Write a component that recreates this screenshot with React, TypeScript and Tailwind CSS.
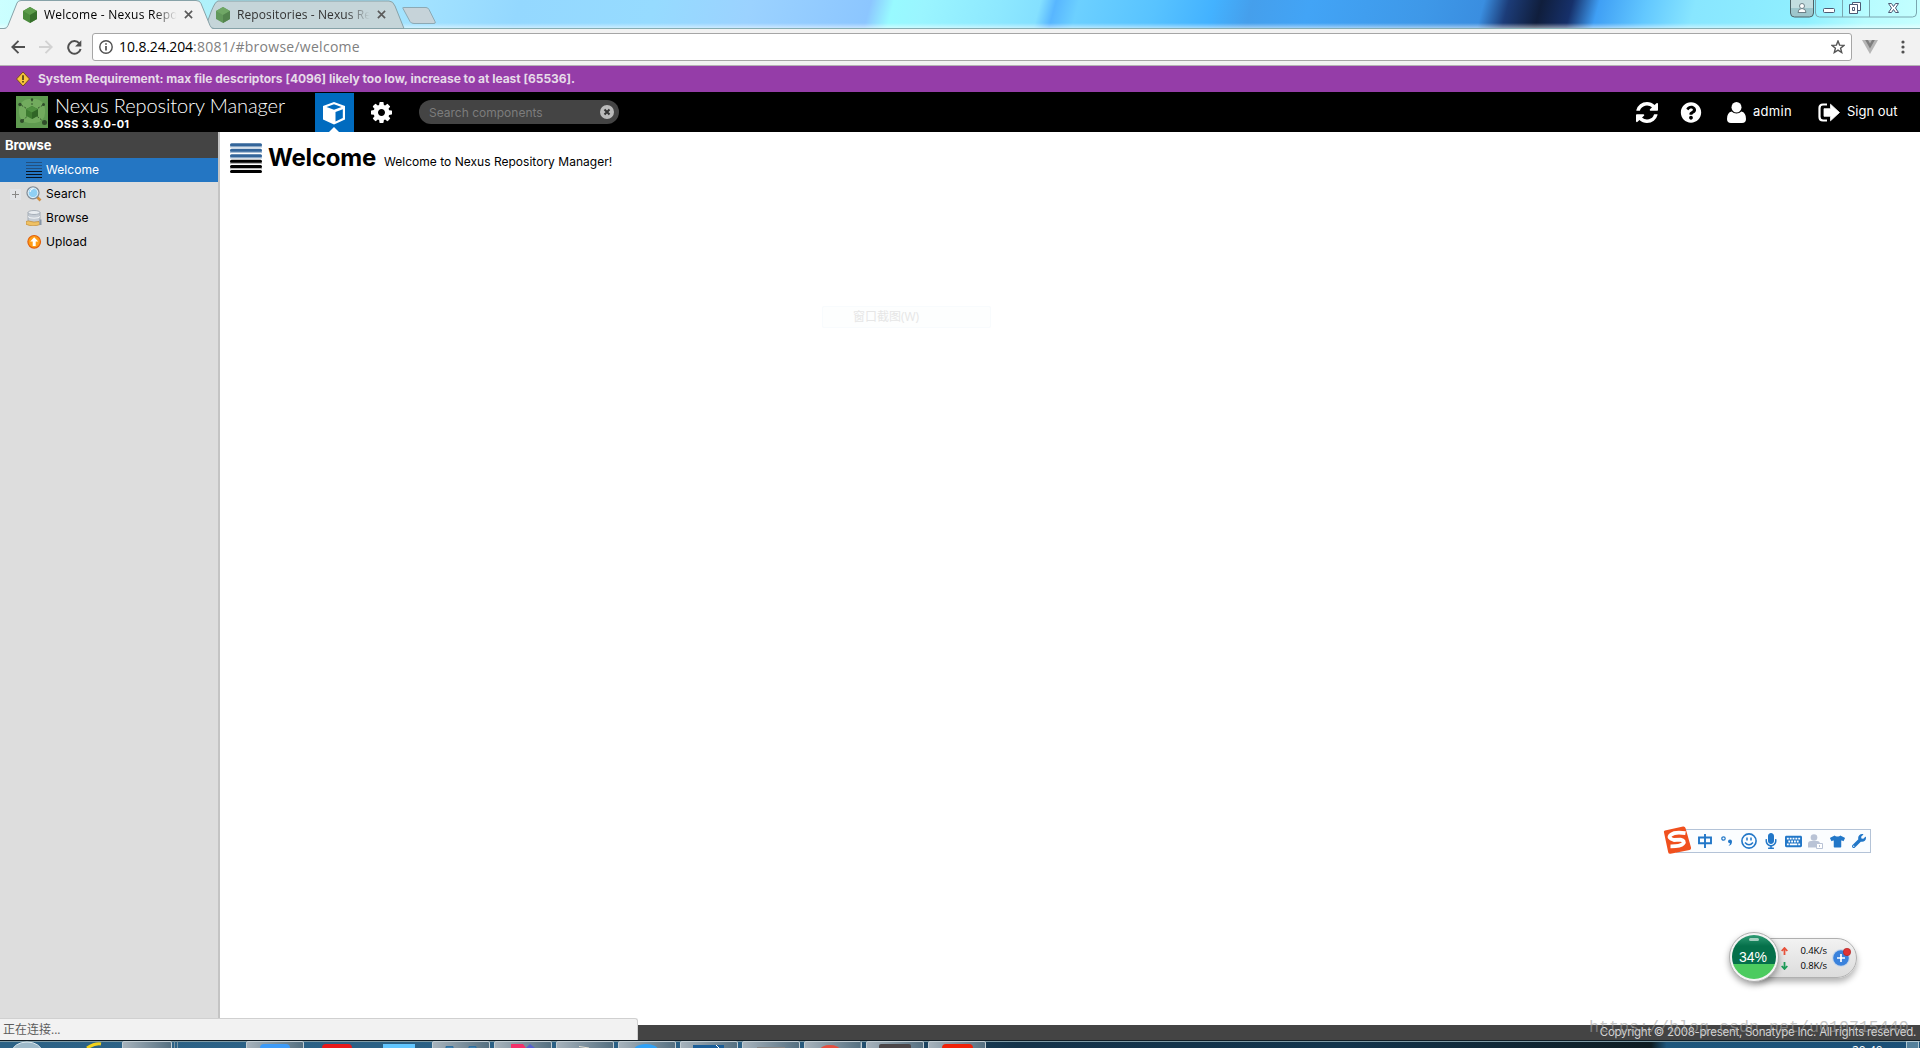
import type { ReactNode } from "react";
import {
  FaKeyboard,
  FaMicrophone,
  FaQuestionCircle,
  FaTshirt,
  FaWrench,
} from "react-icons/fa";

const COG_PATH =
  "M1152 896q0-106-75-181t-181-75-181 75-75 181 75 181 181 75 181-75 75-181zm512-109v222q0 12-8 23t-20 13l-185 28q-19 54-39 91 35 50 107 138 10 12 10 25t-9 23q-27 37-99 108t-94 71q-12 0-26-9l-138-108q-44 23-91 38-16 136-29 186-7 28-36 28h-222q-14 0-24.5-8.5t-11.5-21.5l-28-184q-49-16-90-37l-141 107q-10 9-25 9-14 0-25-11-126-114-165-168-7-10-7-23 0-12 8-23 15-21 51-66.5t54-70.5q-27-50-41-99l-183-27q-13-2-21-12.5t-8-23.5v-222q0-12 8-23t19-13l186-28q14-46 39-92-40-57-107-138-10-12-10-24 0-10 9-23 26-36 98.5-107.5t94.5-71.5q13 0 26 10l138 107q44-23 91-38 16-136 29-186 7-28 36-28h222q14 0 24.5 8.5t11.5 21.5l28 184q49 16 90 37l142-107q9-9 24-9 13 0 25 10 129 119 165 170 7 8 7 22 0 12-8 23-15 21-51 66.5t-54 70.5q26 50 41 98l183 28q13 2 21 12.5t8 23.5z";

const REFRESH_PATH =
  "M1639 1056q0 5-1 7-64 268-268 434.5t-478 166.5q-146 0-282.5-55t-243.5-157l-129 129q-19 19-45 19t-45-19-19-45v-448q0-26 19-45t45-19h448q26 0 45 19t19 45-19 45l-137 137q71 66 161 102t187 36q134 0 250-65t186-179q11-17 53-117 8-23 30-23h192q13 0 22.5 9.5t9.5 22.5zm25-800v448q0 26-19 45t-45 19h-448q-26 0-45-19t-19-45 19-45l138-138q-148-137-349-137-134 0-250 65t-186 179q-11 17-53 117-8 23-30 23h-199q-13 0-22.5-9.5t-9.5-22.5v-7q65-268 270-434.5t480-166.5q146 0 284 55.5t245 156.5l130-129q19-19 45-19t45 19 19 45z";

function HexIcon() {
  return (
    <svg viewBox="0 0 16 16" className="h-4 w-4 shrink-0">
      <path d="M8 0l7 4v8l-7 4-7-4V4z" fill="#4a8a3c" />
      <path d="M8 0l7 4-7 4-7-4z" fill="#5c9c4a" />
      <path d="M15 4v8l-7 4V8z" fill="#37702c" />
    </svg>
  );
}

function TabClose() {
  return (
    <svg viewBox="0 0 10 10" className="h-[9px] w-[9px] shrink-0">
      <path d="M1 1l8 8M9 1l-8 8" stroke="#5a5a5a" strokeWidth="1.8" />
    </svg>
  );
}

function TabStrip() {
  return (
    <div className="relative h-[29px] shrink-0 overflow-hidden bg-[linear-gradient(105deg,#ccffff_0%,#b0f2fa_10%,#a2e2ff_22%,#94d8ff_27%,#96dbff_34%,#9bd2ff_39%,#8cc6ff_45.2%,#98faff_46.4%,#9af5ff_48%,#8de8ff_52%,#84e0ff_54%,#58b6ff_54.8%,#6cd0ff_56%,#58c3ff_60%,#43b2ff_63%,#459fec_65%,#42a4f6_68%,#3e98e8_74%,#3a8ee0_77%,#1c3c78_78.3%,#101e3c_80%,#16306a_81.6%,#3f9ff5_83%,#63c8ff_85.5%,#88e6ff_88%,#90f0ff_94%,#b8fcff_97%,#c5ffff_100%)]">
      <div className="absolute inset-x-0 bottom-0 h-[6px] bg-gradient-to-b from-white/0 to-white/60" />
      <svg className="absolute top-0 left-0" width="1920" height="29">
        <path d="M0 28.5H1920" stroke="#85adb2" />
        <path d="M205 28.5L211 12q4-10.5 7-11h171q4 0 6 5l9 22.5z" fill="#c5d5d9" stroke="#87a2a8" />
        <path d="M403 8.500q-1-1 1-1h22q2 0 3 2l6 12q1 2-1 2h-20q-3 0-4-2z" fill="#c6d3d9" stroke="#8ca9b4" />
        <path d="M0 29L0 28.500H5q2 0 3-3L17 3q1-2.500 4-2.500H196q4 0 5 3l9 22q1 3 3 3.500z" fill="#f2f2f2" />
        <path d="M0 28.500H4q3 0 4-3L17 3q1-2.500 4-2.500H196q4 0 5 3l9 22q1 3 4 3" fill="none" stroke="#87a2a8" />
      </svg>
      <div className="relative flex h-[29px] items-center pl-[22px] font-['Open_Sans','Noto_Sans',sans-serif] text-[12px]">
        <HexIcon />
        <span className="ml-[6px] w-[134px] overflow-hidden whitespace-nowrap tracking-[0.25px] text-black [mask-image:linear-gradient(to_right,black_82%,transparent_99%)]">
          Welcome - Nexus Repository
        </span>
        <span className="ml-[6px] flex">
          <TabClose />
        </span>
        <span className="ml-[22px] flex opacity-80">
          <HexIcon />
        </span>
        <span className="ml-[6px] w-[134px] overflow-hidden whitespace-nowrap tracking-[0.1px] text-[#333] [mask-image:linear-gradient(to_right,black_82%,transparent_99%)]">
          Repositories - Nexus Repository
        </span>
        <span className="ml-[6px] flex">
          <TabClose />
        </span>
      </div>
      <svg className="absolute top-0 left-[1789px]" width="130" height="19">
        <path d="M1.500 0v13q0 4 4 4h15q4 0 4-4V0z" fill="#9ec6cc" stroke="#4c6369" />
        <path d="M2 0h22v8H2z" fill="#c3dde0" />
        <circle cx="13" cy="6" r="2.500" fill="#fff" stroke="#6d8188" />
        <path d="M9 12.500q0-4 4-4t4 4z" fill="#fff" stroke="#6d8188" />
        <path d="M26.500 0v13q0 4 4 4h93q4 0 4-4V0M53.500 0v17M80.500 0v17" fill="none" stroke="#7aa6b0" />
        <rect x="34.500" y="8.500" width="11" height="4" rx="1" fill="#fff" stroke="#4d5a74" />
        <path d="M63.500 2.500h8v8h-8z" fill="#fff" stroke="#4d5a74" />
        <path d="M60.500 4.500h8v9h-8z" fill="#fff" stroke="#4d5a74" />
        <path d="M63.500 7.500h2v3h-2z" fill="#fff" stroke="#4d5a74" />
        <path d="M99.500 3.500h3l2 3 2-3h3l-3 4.500 3 4.500h-3l-2-3-2 3h-3l3-4.500z" fill="#fff" stroke="#4d5a74" />
      </svg>
    </div>
  );
}

function AddressBar() {
  return (
    <div className="flex h-[37px] shrink-0 items-center border-b border-[#b5b2b5] bg-[#f2f2f2] pl-[11px] font-['Open_Sans','Noto_Sans',sans-serif]">
      <svg viewBox="0 0 14 14" className="h-[14px] w-[14px]">
        <path d="M14 7H1.500M7.500 .8L1.300 7l6.200 6.200" fill="none" stroke="#505050" strokeWidth="1.900" />
      </svg>
      <svg viewBox="0 0 14 14" className="ml-[14px] h-[14px] w-[14px]">
        <path d="M0 7h12.500M6.500 .8L12.700 7l-6.200 6.200" fill="none" stroke="#d2d2d2" strokeWidth="1.900" />
      </svg>
      <svg viewBox="0 0 15 15" className="ml-[14px] h-[15px] w-[15px]">
        <path d="M12.300 3.300A6.300 6.300 0 1 0 13.600 9" fill="none" stroke="#505050" strokeWidth="2" />
        <path d="M14.300 .3v6.200H8.100z" fill="#505050" />
      </svg>
      <div className="ml-[10px] flex h-[28px] w-[1760px] items-center rounded-[3px] border border-[#a6a6a6] bg-white pr-[6px] pl-[6px]">
        <svg viewBox="0 0 14 14" className="h-[14px] w-[14px]">
          <circle cx="7" cy="7" r="6.200" fill="none" stroke="#505050" strokeWidth="1.400" />
          <path d="M7 6v4.500M7 3.300v1.500" stroke="#505050" strokeWidth="1.700" />
        </svg>
        <span className="ml-[6px] flex-1 pb-[2px] text-[14px] text-[#808080]">
          <span className="tracking-[-0.1px] text-black">10.8.24.204</span>
          <span className="tracking-[0.27px]">:8081/#browse/welcome</span>
        </span>
        <svg viewBox="0 0 14 14" className="h-[14px] w-[14px]">
          <path d="M7 1l1.600 4.100 4.400.3-3.400 2.800 1.100 4.300L7 10.100l-3.700 2.400 1.100-4.300L1 5.400l4.400-.3z" fill="none" stroke="#555" strokeWidth="1.400" />
        </svg>
      </div>
      <svg viewBox="0 0 16 14" className="ml-[10px] h-[14px] w-[16px]">
        <path d="M0 0h16L8 14z" fill="#b5b5b5" />
        <path d="M3.200 0H6l2 3.400L10 0h2.800L8 8.500z" fill="#7e7e7e" />
      </svg>
      <svg viewBox="0 0 4 14" className="ml-[23px] h-[14px] w-[4px]" fill="#505050">
        <circle cx="2" cy="2" r="1.600" />
        <circle cx="2" cy="7" r="1.600" />
        <circle cx="2" cy="12" r="1.600" />
      </svg>
    </div>
  );
}

function WarningBar() {
  return (
    <div className="flex h-[26px] shrink-0 items-center bg-[#953da8] pl-[15px]">
      <svg viewBox="0 0 16 16" className="h-[16px] w-[16px]">
        <path d="M8 1l6.500 7L8 15 1.500 8z" fill="#f8c63c" stroke="#7a4a20" />
        <path d="M8 4.300v4.600M8 10v1.600" stroke="#3a2b10" strokeWidth="1.500" />
      </svg>
      <span className="ml-[7px] text-[12px] font-bold tracking-[-0.02px] text-[#e6dbe8]">
        System Requirement: max file descriptors [4096] likely too low, increase to at least [65536].
      </span>
    </div>
  );
}

function NexusLogo() {
  return (
    <svg viewBox="0 0 32 32" className="h-8 w-8">
      <rect width="32" height="32" fill="#5f9a50" />
      <rect x="3" y="3" width="26" height="24" rx="10" fill="#7fb868" opacity=".6" />
      <path d="M16 16V4M16 16L5 9M16 16l11-7M16 16L6 25M16 16l12 10" stroke="#35552d" strokeDasharray="2 1.500" />
      <g fill="#2f4d2a">
        <circle cx="16" cy="3.500" r="1.200" />
        <circle cx="4" cy="8.500" r="1.700" />
        <circle cx="27.500" cy="8.500" r="1.500" />
        <circle cx="6" cy="25" r="2" />
        <circle cx="28.500" cy="26.500" r="2.500" />
      </g>
      <path d="M16 10l6 3.300v6.400L16 23l-6-3.300v-6.400z" fill="#3d7a30" />
      <path d="M16 10l6 3.300-6 3.200-6-3.200z" fill="#4f9040" />
      <path d="M22 13.300v6.400L16 23v-6.500z" fill="#2f6526" />
    </svg>
  );
}

function Header() {
  return (
    <div className="flex h-[40px] shrink-0 items-center bg-black text-white">
      <div className="flex w-[315px] items-center pl-[16px]">
        <NexusLogo />
        <div className="ml-[7px] flex flex-col">
          <span className="-mt-px font-['Lato',sans-serif] text-[20px] leading-[24px] font-light tracking-[-0.1px] whitespace-nowrap">
            Nexus Repository Manager
          </span>
          <span className="mt-px text-[11px] leading-[12px] font-bold tracking-[0.3px]">OSS 3.9.0-01</span>
        </div>
      </div>
      <div className="relative mt-px flex h-[39px] w-[39px] items-center pl-[7px] bg-[#006bbf]">
        <svg viewBox="0 0 24 24" className="h-[24px] w-[24px]">
          <path d="M12 1l11 4v13.500L12 23.500 1 18.500V5z" fill="#fff" />
          <path d="M12 3.300L19.500 6 12 8.800 4.500 6z" fill="#006bbf" />
          <path d="M13.500 11l7.300-2.800v8.900l-7.300 3.500z" fill="#006bbf" />
        </svg>
        <svg viewBox="0 0 10 5" className="absolute bottom-0 left-[14px] h-[5px] w-[10px]">
          <path d="M0 5l5-5 5 5z" fill="#fff" />
        </svg>
      </div>
      <svg viewBox="128 128 1536 1536" className="ml-[17px] h-[21px] w-[21px]" fill="#fff">
        <path d={COG_PATH} />
      </svg>
      <div className="ml-[27px] flex h-[24px] w-[200px] items-center justify-between rounded-full bg-[#444] pr-[5px] pl-[10px]">
        <span className="pt-px text-[12px] text-[#7c7c7c]">Search components</span>
        <svg viewBox="0 0 14 14" className="h-[14px] w-[14px]">
          <circle cx="7" cy="7" r="7" fill="#bbb" />
          <path d="M4.500 4.500l5 5M9.500 4.500l-5 5" stroke="#333" strokeWidth="2" />
        </svg>
      </div>
      <div className="flex flex-1 items-center justify-end pr-[22px] text-[13px]">
        <svg viewBox="128 128 1536 1536" className="h-[21px] w-[22px]" fill="#fff" preserveAspectRatio="none">
          <path d={REFRESH_PATH} />
        </svg>
        <FaQuestionCircle className="ml-[22px] h-[21px] w-[22px]" />
        <svg viewBox="0 0 19 21" className="ml-[25px] h-[21px] w-[19px]" fill="#fff">
          <ellipse cx="9.500" cy="5.200" rx="5" ry="5.200" />
          <path d="M4.600 9.500q2 2 4.900 2t4.900-2Q19 10.500 19 17q0 4-4 4H4q-4 0-4-4 0-6.500 4.600-7.500z" />
        </svg>
        <span className="ml-[7px] w-[40px] tracking-[0.3px] whitespace-nowrap">admin</span>
        <svg viewBox="0 0 22 19" className="ml-[25px] h-[19px] w-[22px]">
          <path d="M9 1.500H5q-3.500 0-3.500 3.500v9q0 3.500 3.500 3.500h4" fill="none" stroke="#fff" strokeWidth="2.200" />
          <path d="M12.500 1.200L21.500 9.500l-9 8.300V13.300H6V5.700h6.500z" fill="#fff" strokeLinejoin="round" stroke="#fff" strokeWidth=".8" />
        </svg>
        <span className="ml-[7px] w-[51px] whitespace-nowrap">Sign out</span>
      </div>
    </div>
  );
}

function NavItem({ icon, label, active, expandable }: {
  icon: ReactNode;
  label: string;
  active?: boolean;
  expandable?: boolean;
}) {
  return (
    <div className={`flex h-[24px] items-center pl-[10px] ${active ? "bg-[#2476c3] text-white" : "text-black"}`}>
      <span className={`flex h-[11px] w-[11px] items-center justify-center ${expandable ? "bg-[#e2e4e8]" : ""}`}>
        {expandable && (
          <svg viewBox="0 0 7 7" className="h-[7px] w-[7px]">
            <path d="M3.500 0v7M0 3.500h7" stroke="#888" />
          </svg>
        )}
      </span>
      <span className="ml-[5px] flex h-4 w-4">{icon}</span>
      <span className="ml-[4px] text-[12px] tracking-[0.05px]">{label}</span>
    </div>
  );
}

function Sidebar() {
  return (
    <div className="w-[220px] shrink-0 border-r-2 border-[#c4c4c4] bg-[#dddddd]">
      <div className="flex h-[26px] items-center bg-[#444] pt-[2px] pl-[5px] text-[13px] font-bold tracking-[-0.2px] text-white">
        Browse
      </div>
      <NavItem
        active
        label="Welcome"
        icon={
          <svg viewBox="0 0 16 16" className="h-4 w-4">
            <path d="M0 .5h16M0 3.500h16M0 6.500h16" stroke="#234f7e" />
            <path d="M0 9.500h16M0 12.500h16M0 15.500h16" stroke="#08131f" />
          </svg>
        }
      />
      <NavItem
        expandable
        label="Search"
        icon={
          <svg viewBox="0 0 16 16" className="h-4 w-4">
            <path d="M11 11l3.500 3.500" stroke="#cf8f42" strokeWidth="2.600" />
            <circle cx="7" cy="6.800" r="6" fill="#8fd0f5" stroke="#858c94" strokeWidth="1.300" />
            <circle cx="7" cy="6.800" r="4.800" fill="none" stroke="#e4eff6" />
            <path d="M4 6q.5-3 3.500-3.500" stroke="#fff" fill="none" />
          </svg>
        }
      />
      <NavItem
        label="Browse"
        icon={
          <svg viewBox="0 0 16 16" className="h-4 w-4">
            <path d="M2 2.500v8q0 2 6 2t6-2v-8z" fill="#c5ccd4" stroke="#9aa3ad" strokeWidth=".8" />
            <ellipse cx="8" cy="2.500" rx="6" ry="2" fill="#e9edf1" stroke="#9aa3ad" strokeWidth=".8" />
            <path d="M2 6.500q1 1.700 6 1.700t6-1.700" fill="none" stroke="#f4f6f8" />
            <path d="M0 11.500q2.500-1.200 5 0l3 .6 5-.6 1 3q-3 1.300-7 1.300-4 0-7-1.600z" fill="#efc163" stroke="#c18b35" strokeWidth=".7" />
            <path d="M13.500 9.500h2V15h-2z" fill="#8796a8" />
          </svg>
        }
      />
      <NavItem
        label="Upload"
        icon={
          <svg viewBox="0 0 16 16" className="h-4 w-4">
            <circle cx="8.200" cy="7.800" r="6.300" fill="#ff9d14" stroke="#e2600c" strokeWidth="1.200" />
            <path d="M8.200 3.300l4 4.300H9.700V12H6.700V7.600H4.200z" fill="#fff" />
          </svg>
        }
      />
    </div>
  );
}

function WelcomeHeader() {
  return (
    <div className="flex pt-[11px] pl-[10px]">
      <svg viewBox="0 0 32 31" className="h-[31px] w-[32px]">
        <path d="M0 3h32M0 8.500h32M0 14h32" stroke="#a9bfd6" strokeWidth="3" />
        <path d="M0 19.500h32M0 24.700h32" stroke="#b4b4b4" strokeWidth="3" />
        <path d="M1.500 1.700h29M1.500 7.200h29M1.500 12.700h29" stroke="#33659a" strokeWidth="3" strokeLinecap="round" />
        <path d="M1.500 18.200h29M1.500 23.400h29M1.500 28.500h29" stroke="#000" strokeWidth="3" strokeLinecap="round" />
      </svg>
      <div className="ml-[6px] flex items-baseline whitespace-nowrap">
        <h1 className="w-[116px] text-[24px] leading-[30px] font-bold tracking-[-0.2px]">Welcome</h1>
        <span className="text-[12px] tracking-[0.02px]">Welcome to Nexus Repository Manager!</span>
      </div>
    </div>
  );
}

function InputMethodBar() {
  return (
    <div className="absolute top-[829px] left-[1676px] flex h-[24px] w-[195px] items-center border border-[#b4c3d7] bg-[#fbfdff] pl-[17px] text-[#2277c8]">
      <svg viewBox="0 0 28 28" className="absolute -top-[4px] -left-[14px] h-[28px] w-[28px]">
        <path d="M1 6.500Q.5 5 2 4.600L20 .5q2-.3 2.500 1.500L28 21.500q.3 2-1.500 2.500L7.500 27.800q-2 .2-2.300-1.500z" fill="#f0501e" />
        <path d="M22.500 7.200Q12 5.500 8 8.700T11 14l6.500-.3q5 1.300 2.500 4T7.500 20.300" fill="none" stroke="#fff" strokeWidth="3.800" />
      </svg>
      <span className="flex w-[22px] justify-center">
        <svg viewBox="0 0 14 14" className="h-[14px] w-[14px]">
          <path d="M1 3.500h12v5.800H1zM7 0v14" fill="none" stroke="currentColor" strokeWidth="1.900" />
        </svg>
      </span>
      <span className="flex w-[22px] justify-center">
        <svg viewBox="0 0 12 12" className="h-[12px] w-[12px]">
          <circle cx="2.500" cy="3.500" r="1.700" fill="none" stroke="currentColor" strokeWidth="1.200" />
          <path d="M7 6.500q0-2 2-2t2 2q0 3.500-3.500 4.500 1.500-1.500 1.500-2.800Q7 8 7 6.500z" fill="currentColor" />
        </svg>
      </span>
      <span className="flex w-[22px] justify-center">
        <svg viewBox="0 0 16 16" className="h-[16px] w-[16px]" fill="none" stroke="currentColor">
          <circle cx="8" cy="8" r="7.100" strokeWidth="1.600" />
          <path d="M6 4.500v3M10 4.500v3M4 9.500q4 4.500 8 0" strokeWidth="1.500" />
        </svg>
      </span>
      <span className="flex w-[22px] justify-center">
        <FaMicrophone size={16} />
      </span>
      <span className="flex w-[22px] justify-center">
        <FaKeyboard size={17} />
      </span>
      <span className="flex w-[22px] justify-center">
        <svg viewBox="0 0 15 15" className="h-[15px] w-[15px]">
          <circle cx="6" cy="3.500" r="3.300" fill="#b9c3d6" />
          <path d="M0 13.500V10q0-3 3-3h6q3 0 3 3v3.500z" fill="#b9c3d6" />
          <path d="M8.500 9.500h6v5h-6z" fill="#fff" stroke="#b9c3d6" />
          <path d="M11.500 11v2" stroke="#b9c3d6" />
        </svg>
      </span>
      <span className="flex w-[22px] justify-center">
        <FaTshirt size={15} />
      </span>
      <span className="flex w-[22px] justify-center">
        {/* jaw points to the upper right */}
        <FaWrench size={14} className="rotate-0" />
      </span>
    </div>
  );
}

function NetMeter() {
  return (
    <div className="absolute top-[938px] left-[1742px] h-[40px] w-[115px] rounded-full border border-[#b0b0b0] bg-gradient-to-b from-[#f2f2f2] to-[#dcdcdc] font-['Open_Sans','Noto_Sans',sans-serif] shadow-[0_4px_6px_rgba(0,0,0,0.3)]">
      <div className="ml-[38px] flex h-full w-[46px] flex-col justify-center text-[9.5px] leading-[15px] font-medium tracking-[-0.1px] text-black">
        <div className="flex items-center justify-between">
          <svg viewBox="0 0 7 8" className="h-[8px] w-[7px]">
            <path d="M3.500 8V2M.7 4l2.800-3 2.800 3" fill="none" stroke="#e8533c" strokeWidth="1.800" />
          </svg>
          <span>0.4K/s</span>
        </div>
        <div className="flex items-center justify-between">
          <svg viewBox="0 0 7 8" className="h-[8px] w-[7px]">
            <path d="M3.500 0v6M.7 4l2.800 3 2.800-3" fill="none" stroke="#1e9c58" strokeWidth="1.800" />
          </svg>
          <span>0.8K/s</span>
        </div>
      </div>
      <svg viewBox="0 0 22 22" className="absolute top-[7px] right-[4px] h-[22px] w-[22px]">
        <circle cx="11" cy="12" r="9" fill="#c9d8ea" />
        <circle cx="11" cy="12" r="7.800" fill="#3a82dc" />
        <path d="M11 8v8M7 12h8" stroke="#fff" strokeWidth="1.700" />
        <circle cx="17" cy="6" r="3.700" fill="#e03434" stroke="#a82020" strokeWidth=".6" />
      </svg>
      <div className="absolute -top-[7px] -left-[14px] flex h-[50px] w-[50px] items-center justify-center rounded-full border border-[#b0b0b0] bg-[#f4f4f4] shadow-[0_3px_6px_rgba(0,0,0,0.35)]">
        <div className="relative flex h-[44px] w-[44px] items-center justify-center rounded-full bg-[linear-gradient(to_bottom,#2f9c74_0%,#05704a_25%,#05704a_67%,#4ccb5f_67%,#4ccb5f_100%)] pr-[2px] font-['Liberation_Sans',sans-serif] text-[14px] text-white">
          <span className="absolute top-[3px] left-[17px] h-[3px] w-[10px] rounded-full bg-white/60" />
          34%
        </div>
      </div>
    </div>
  );
}

function Taskbar() {
  return (
    <svg width="1920" height="8" className="block shrink-0">
      <defs>
        <linearGradient id="bar">
          <stop offset="0" stopColor="#2c6286" />
          <stop offset=".4" stopColor="#2a5f84" />
          <stop offset=".53" stopColor="#14334a" />
          <stop offset=".7" stopColor="#12344c" />
          <stop offset=".86" stopColor="#0e1c22" />
          <stop offset=".868" stopColor="#1d567c" />
          <stop offset="1" stopColor="#1b4f76" />
        </linearGradient>
        <linearGradient id="btn">
          <stop offset="0" stopColor="#a7b3bc" />
          <stop offset="1" stopColor="#546f80" />
        </linearGradient>
      </defs>
      <rect width="1920" height="8" fill="url(#bar)" />
      <path d="M0 .5h1920" stroke="#101c24" />
      <path d="M0 1.500h1920" stroke="#7f9ba6" />
      <ellipse cx="27" cy="12" rx="15" ry="10" fill="#9db9c9" stroke="#dce9ef" />
      <path d="M87 8q8-5 14-4" stroke="#f2d21c" strokeWidth="3" fill="none" />
      {[122, 246, 432, 494, 556, 618, 680, 742, 804, 866, 928].map((x) => (
        <rect key={x} x={x + 0.5} y="1.500" width={x === 122 ? 49 : 57} height="9" rx="1.500" fill="url(#btn)" stroke="#c3ced4" />
      ))}
      <path d="M174.500 1v7M177.500 1v7M860.500 1v7" stroke="#7793a2" />
      <rect x="260" y="4" width="30" height="8" rx="4" fill="#3d9bf8" />
      <rect x="322" y="4" width="30" height="8" rx="4" fill="#e8191a" />
      <path d="M383 4h32v4h-32z" fill="#62c6ff" />
      <path d="M446 8V6.500h7V8M469 8V6.500h7V8" fill="#3f7fae" stroke="#2f6f9e" />
      <path d="M511 8V4h12l3 4z" fill="#f3306a" />
      <path d="M526 8l4-4 5 4z" fill="#5560d0" />
      <path d="M579 6.500l10 1.500" stroke="#e4e0d4" />
      <ellipse cx="646" cy="10" rx="12" ry="6" fill="#2fa2f8" />
      <path d="M693 5h31v3h-31z" fill="#1b5e98" />
      <path d="M716 5l3 3" stroke="#fff" />
      <path d="M757 7h28v1h-28z" fill="#858585" />
      <ellipse cx="830" cy="10" rx="10" ry="5" fill="#e54f40" />
      <rect x="879" y="4" width="32" height="8" rx="2" fill="#4b4648" />
      <rect x="942" y="4" width="31" height="8" rx="4" fill="#f02208" />
      <text x="1852" y="15" fontSize="12" fontFamily="Open Sans, sans-serif" fill="#fff">
        20:40
      </text>
      <rect x="1906.500" y="1.500" width="12" height="9" fill="#54809b" stroke="#b2c8d2" />
    </svg>
  );
}

export default function App() {
  return (
    <div className="relative flex h-[1048px] w-[1920px] flex-col overflow-hidden bg-white font-['Inter','Liberation_Sans',sans-serif] text-black">
      <TabStrip />
      <AddressBar />
      <WarningBar />
      <Header />
      <div className="flex min-h-0 flex-1">
        <Sidebar />
        <div className="flex-1 bg-white">
          <WelcomeHeader />
        </div>
      </div>
      <div className="flex h-[15px] shrink-0 items-center justify-end bg-[#444] pt-px pr-[4px] text-[11.5px] tracking-[-0.27px] text-[#d5d5d5]">
        Copyright © 2008-present, Sonatype Inc. All rights reserved.
      </div>
      <Taskbar />

      {/* leftover of a closing context menu */}
      <div className="absolute top-[306px] left-[822px] flex h-[22px] w-[169px] items-center rounded-[2px] border border-[#f8fbfd] bg-[#fdfefe] pl-[30px] font-['Open_Sans','Noto_Sans_CJK_SC',sans-serif] text-[12px] text-[#e6e6e6]">
        窗口截图(W)
      </div>
      <InputMethodBar />
      <NetMeter />
      <div className="absolute top-[1018px] left-0 flex h-[22px] w-[638px] items-center rounded-tr-[3px] border-t border-r border-[#d0d0d0] bg-[#f2f2f2] pl-[3px] font-['Open_Sans','Noto_Sans_CJK_SC',sans-serif] text-[12px] text-[#5c5c5c]">
        正在连接...
      </div>
      <div className="absolute top-[1018px] left-[1589px] font-['Liberation_Mono',monospace] text-[16.667px] leading-[20px] whitespace-nowrap text-[#a0a0a0]/60">
        https://blog.csdn.net/u010715440
      </div>
    </div>
  );
}
